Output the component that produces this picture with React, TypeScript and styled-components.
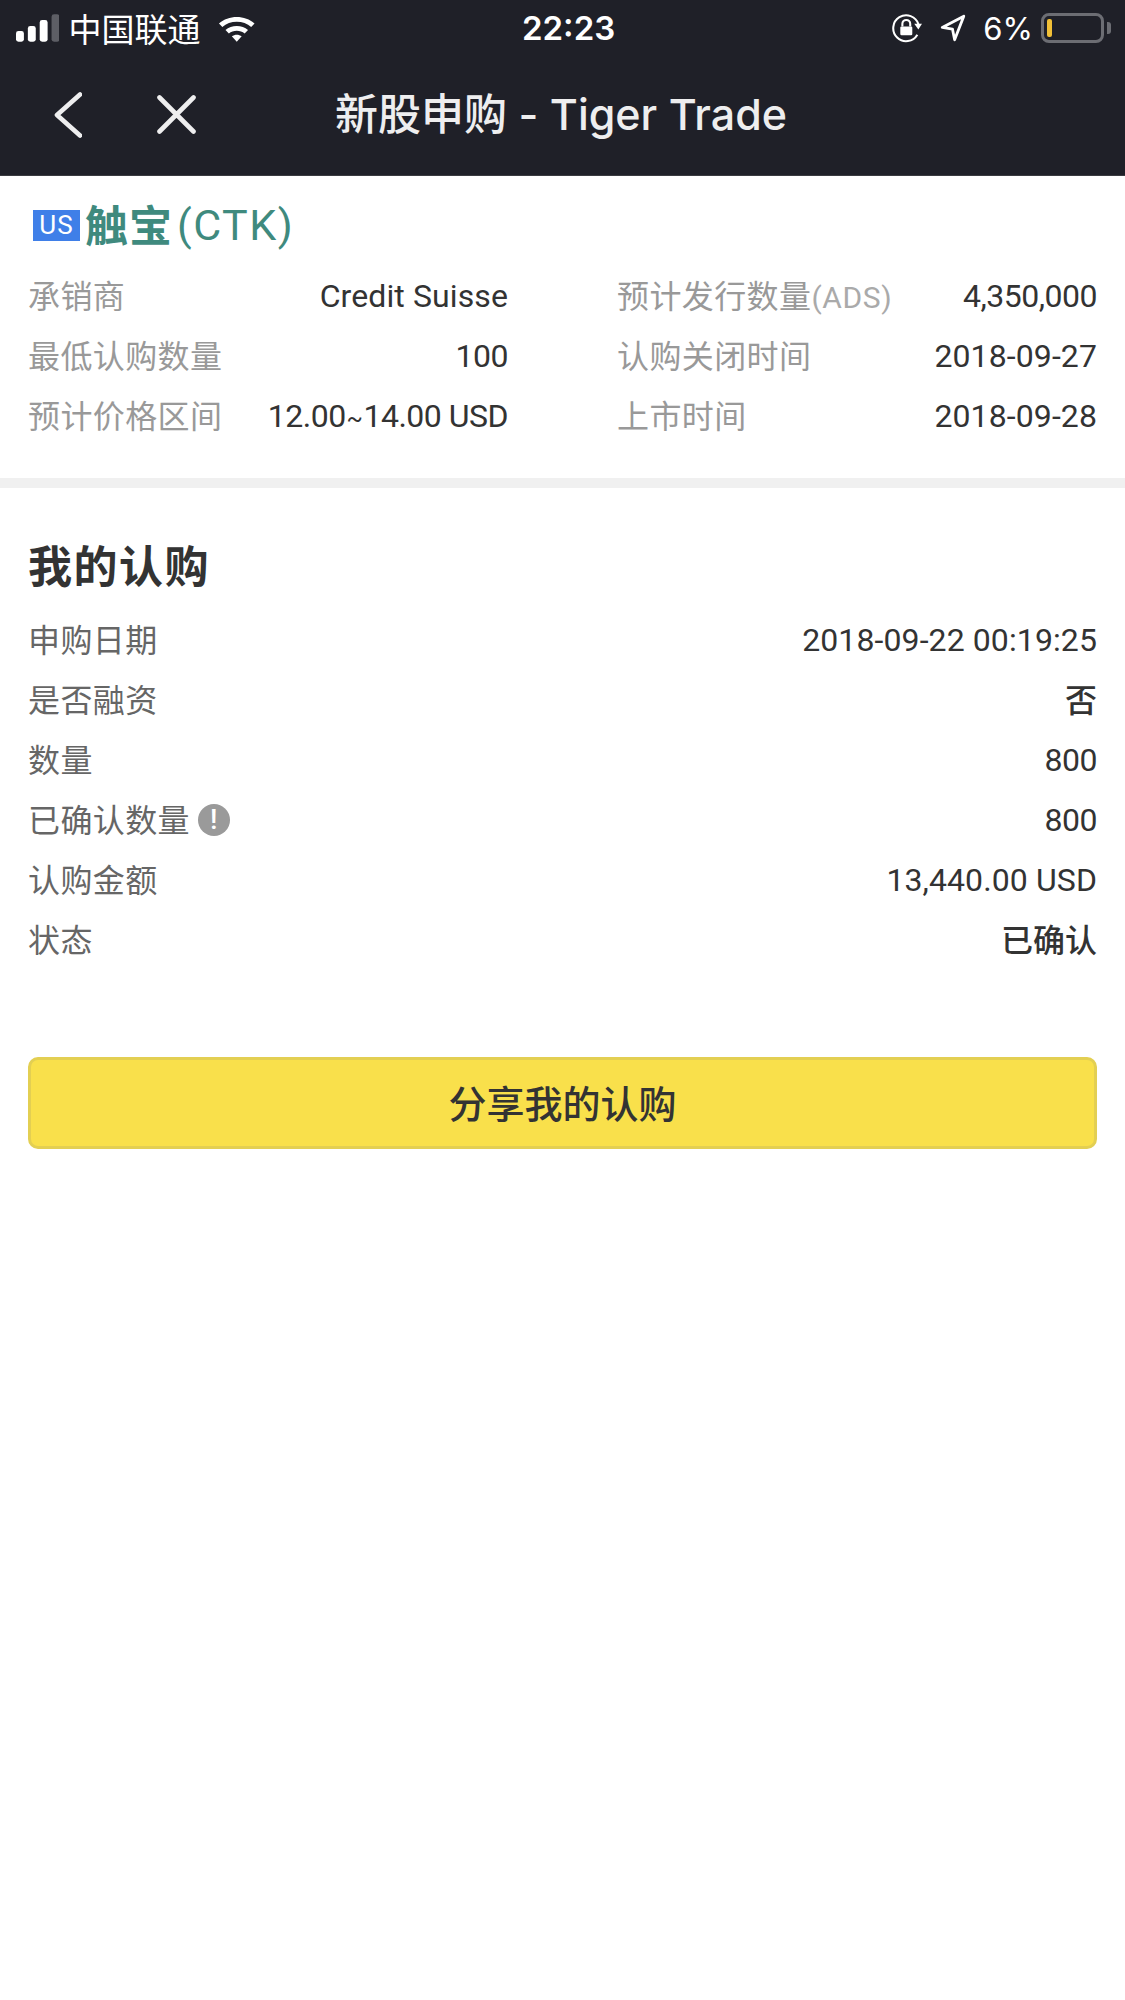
import React from "react"
import styled, { createGlobalStyle } from "styled-components"

const cjk = `"Noto Sans CJK SC", sans-serif`
const din = `Roboto, "Noto Sans CJK SC", sans-serif`

const Global = createGlobalStyle`
  html, body { margin: 0; padding: 0; background: #fff; }
  * { box-sizing: border-box; }
`

const offerRight = [
  ["预计发行数量", "4,350,000"],
  ["认购关闭时间", "2018-09-27"],
  ["上市时间", "2018-09-28"],
]

const App = () => {
  const offerLeft: [string, React.ReactNode][] = [
    ["承销商", "Credit Suisse"],
    ["最低认购数量", "100"],
    ["预计价格区间", <>12.00<Tilde>~</Tilde>14.00 USD</>],
  ]

  return (
    <Page>
      <Global />
      <Header>
        <StatusBar>
          <StatusLeft>
            <svg width="44" height="28" viewBox="0 0 44 28">
              <rect x="0" y="17" width="8" height="11" rx="2.5" fill="#fff" />
              <rect x="12" y="12" width="8" height="16" rx="2.5" fill="#fff" />
              <rect x="24" y="6" width="8" height="22" rx="2.5" fill="#fff" />
              <rect x="36" y="0" width="8" height="28" rx="2.5" fill="#5d5e65" />
            </svg>
            <Carrier>中国联通</Carrier>
            <svg width="38" height="28" viewBox="0 0 38 28">
              <path d="M1 9.5C10.5 0.5 27.5 0.5 37 9.5L33.6 13C26 6 12 6 4.4 13Z" fill="#fff" />
              <path d="M7.6 16C13.5 10.8 24.5 10.8 30.4 16L27 19.5C22.8 16 15.2 16 11 19.5Z" fill="#fff" />
              <path d="M14 22.4C17 20.2 21 20.2 24 22.4L19 28Z" fill="#fff" />
            </svg>
          </StatusLeft>
          <Clock>22:23</Clock>
          <StatusRight>
            <svg width="31" height="31" viewBox="0 0 30 30">
              <path d="M25.5 21A12.5 12.5 0 1 1 26.6 11" fill="none" stroke="#fff" strokeWidth="2" />
              <path d="M22.5 10.5L30 10.5L26.5 16Z" fill="#fff" />
              <path d="M11 13V10.5a3.8 3.8 0 0 1 7.6 0V13" fill="none" stroke="#fff" strokeWidth="2" />
              <rect x="9" y="13" width="11.6" height="8.5" rx="1.2" fill="#fff" />
            </svg>
            <svg width="26" height="28" viewBox="0 0 24 26">
              <path d="M22 2L2 12.5L11.5 14L13.5 24Z" fill="none" stroke="#fff" strokeWidth="2.6" strokeLinejoin="round" />
            </svg>
            <Percent>6%</Percent>
            <Battery>
              <BatteryLevel />
              <BatteryCap />
            </Battery>
          </StatusRight>
        </StatusBar>
        <NavBar>
          <svg width="28" height="46" viewBox="0 0 28 46">
            <path d="M26 2.5L3 23L26 43.5" fill="none" stroke="#eeeeef" strokeWidth="4.6" strokeLinecap="round" strokeLinejoin="round" />
          </svg>
          <CloseIcon width="39" height="39" viewBox="0 0 39 39">
            <path d="M2.5 2.5L36.5 36.5M36.5 2.5L2.5 36.5" stroke="#eeeeef" strokeWidth="4.6" strokeLinecap="round" />
          </CloseIcon>
          <NavTitle>新股申购 - Tiger Trade</NavTitle>
        </NavBar>
      </Header>

      <OfferSection>
        <StockTitle>
          <MarketBadge>US</MarketBadge>
          <StockName>触宝</StockName>
          <StockCode>(CTK)</StockCode>
        </StockTitle>
        <OfferGrid>
          <OfferColumn>
            {offerLeft.map(([label, value], i) => (
              <Row key={label}>
                <OfferLabel>{label}</OfferLabel>
                <OfferValue $tight={i > 0}>{value}</OfferValue>
              </Row>
            ))}
          </OfferColumn>
          <OfferColumn>
            {offerRight.map(([label, value], i) => (
              <Row key={label}>
                <OfferLabel>
                  {label}
                  {i === 0 && <Unit>(ADS)</Unit>}
                </OfferLabel>
                <OfferValue $tight={i === 0}>{value}</OfferValue>
              </Row>
            ))}
          </OfferColumn>
        </OfferGrid>
      </OfferSection>

      <Divider />

      <MineSection>
        <Heading>我的认购</Heading>
        <Row>
          <MineLabel>申购日期</MineLabel>
          <OfferValue>2018-09-22 00:19:25</OfferValue>
        </Row>
        <Row>
          <MineLabel>是否融资</MineLabel>
          <StrongValue>否</StrongValue>
        </Row>
        <Row>
          <MineLabel>数量</MineLabel>
          <OfferValue $tight>800</OfferValue>
        </Row>
        <Row>
          <MineLabel>
            已确认数量
            <InfoDot>!</InfoDot>
          </MineLabel>
          <OfferValue $tight>800</OfferValue>
        </Row>
        <Row>
          <MineLabel>认购金额</MineLabel>
          <OfferValue>13,440.00 USD</OfferValue>
        </Row>
        <Row>
          <MineLabel>状态</MineLabel>
          <StrongValue>已确认</StrongValue>
        </Row>
        <ShareButton>分享我的认购</ShareButton>
      </MineSection>
    </Page>
  )
}

export default App

const Page = styled.div`
  width: 1125px;
  min-height: 2000px;
  background: #fff;
  font-family: ${cjk};
`
const Header = styled.div`
  height: 176px;
  background: #1f2028;
  border-bottom: 1px solid #3a3b40;
`
const StatusBar = styled.div`
  height: 56px;
  padding: 0 15px 0 16px;
  display: flex;
  align-items: center;
  justify-content: space-between;
  color: #fff;
`
const StatusLeft = styled.div`
  width: 240px;
  display: flex;
  align-items: center;
`
const Carrier = styled.span`
  margin: 0 18px 0 9px;
  font-size: 33px;
  line-height: 40px;
  white-space: nowrap;
`
const Clock = styled.span`
  font-family: Inter, sans-serif;
  font-size: 33px;
  font-weight: 600;
  margin-left: 266px;
`
const StatusRight = styled.div`
  display: flex;
  align-items: center;
  margin-left: auto;
  gap: 18px;
`
const Percent = styled.span`
  font-family: Inter, sans-serif;
  font-size: 31px;
  margin: 0 -10px 0 -1px;
`
const Battery = styled.div`
  position: relative;
  width: 63px;
  height: 30px;
  border: 3px solid #6c6d73;
  border-radius: 8px;
  padding: 3px;
  margin-right: 6px;
`
const BatteryLevel = styled.div`
  width: 5px;
  height: 100%;
  background: #f2c037;
  border-radius: 2px;
`
const BatteryCap = styled.div`
  position: absolute;
  top: 6px;
  right: -10px;
  width: 4px;
  height: 12px;
  background: #6c6d73;
  border-radius: 0 3px 3px 0;
`
const NavBar = styled.div`
  height: 119px;
  padding: 0 0 2px 54px;
  display: flex;
  align-items: center;
  color: #eeeeef;
`
const CloseIcon = styled.svg`
  margin-left: 75px;
`
const NavTitle = styled.div`
  margin: 0 0 8px 139px;
  font-family: Inter, ${cjk};
  font-size: 43px;
  font-weight: 500;
  white-space: nowrap;
`
const OfferSection = styled.div`
  padding: 0 28px 32px;
`
const StockTitle = styled.div`
  height: 90px;
  display: flex;
  align-items: center;
  padding: 8px 0 0 5px;
  color: #3f8a7e;
`
const MarketBadge = styled.span`
  width: 47px;
  height: 31px;
  background: #3f7fe8;
  color: #fff;
  font-family: ${din};
  font-size: 26px;
  line-height: 31px;
  text-align: center;
  letter-spacing: 1px;
`
const StockName = styled.span`
  margin: 0 0 4px 5px;
  font-size: 43px;
  font-weight: 700;
  letter-spacing: 1px;
  line-height: 50px;
`
const StockCode = styled.span`
  margin-left: 4px;
  font-family: ${din};
  font-size: 43px;
  letter-spacing: 1.5px;
  line-height: 50px;
`
const OfferGrid = styled.div`
  display: grid;
  grid-template-columns: 480px 480px;
  column-gap: 109px;
`
const OfferColumn = styled.div``
const Row = styled.div`
  height: 60px;
  padding-bottom: 4px;
  display: flex;
  align-items: center;
  justify-content: space-between;
`
const OfferLabel = styled.div`
  font-size: 32px;
  letter-spacing: 0.4px;
  color: #999;
  white-space: nowrap;
`
const Unit = styled.span`
  font-family: ${din};
  font-size: 30px;
  color: #aaa;
  letter-spacing: 0.6px;
`
const OfferValue = styled.div<{ $tight?: boolean }>`
  padding-top: 4px;
  font-family: ${din};
  font-size: 32px;
  color: #333;
  letter-spacing: ${(p) => (p.$tight ? "-0.5px" : "0.1px")};
  white-space: nowrap;
`
const Tilde = styled.span`
  font-size: 24px;
  margin: 0 1px;
`
const StrongValue = styled.div`
  font-size: 32px;
  font-weight: 500;
  color: #333;
`
const Divider = styled.div`
  height: 10px;
  background: #f0f0f0;
`
const MineSection = styled.div`
  padding: 0 28px;
`
const Heading = styled.div`
  padding-top: 46px;
  height: 122px;
  font-size: 44px;
  letter-spacing: 1.5px;
  line-height: 60px;
  font-weight: 700;
  color: #333;
`
const MineLabel = styled.div`
  display: flex;
  align-items: center;
  font-size: 32px;
  letter-spacing: 0.4px;
  color: #666;
  white-space: nowrap;
`
const InfoDot = styled.span`
  width: 32px;
  height: 32px;
  margin: 4px 0 0 8px;
  border-radius: 50%;
  background: #9a9a9a;
  color: #fff;
  font-family: ${din};
  font-size: 28px;
  font-weight: 500;
  line-height: 32px;
  text-align: center;
`
const ShareButton = styled.div`
  margin-top: 87px;
  height: 92px;
  padding-bottom: 4px;
  background: #f9e04b;
  border: 3px solid #e3cf52;
  border-radius: 10px;
  display: flex;
  align-items: center;
  justify-content: center;
  font-size: 38px;
  font-weight: 500;
  color: #333;
`
